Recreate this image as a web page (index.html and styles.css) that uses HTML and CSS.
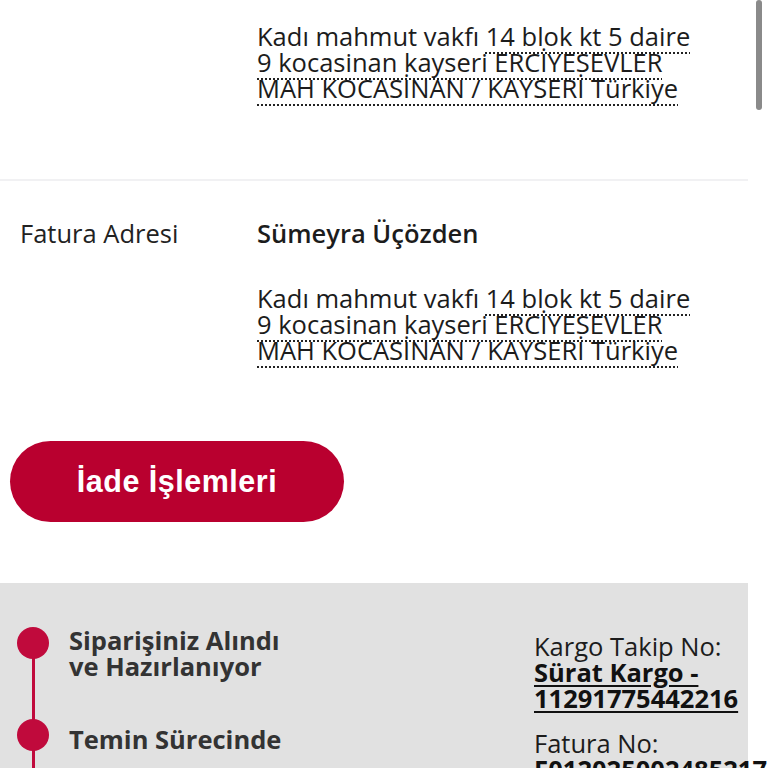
FILE: index.html
```html
<!DOCTYPE html>
<html lang="tr">
<head>
<meta charset="utf-8">
<link rel="stylesheet" href="styles.css">
</head>
<body>
<div class="page">
  <section class="addr-row first">
    <div class="label"></div>
    <div class="value">
      <p class="addr">Kadı mahmut vakfı <span class="detected">14 blok kt 5 daire 9 kocasinan kayseri ERCİYESEVLER MAH KOCASİNAN / KAYSERİ Türkiye</span></p>
    </div>
  </section>
  <div class="sep"></div>
  <section class="addr-row second">
    <div class="label">Fatura Adresi</div>
    <div class="value">
      <div class="name">Sümeyra Üçözden</div>
      <p class="addr">Kadı mahmut vakfı <span class="detected">14 blok kt 5 daire 9 kocasinan kayseri ERCİYESEVLER MAH KOCASİNAN / KAYSERİ Türkiye</span></p>
    </div>
  </section>
  <div class="btn-wrap">
    <button class="btn">İade İşlemleri</button>
  </div>
  <section class="status">
    <ol class="timeline">
      <li class="step"><span class="dot"></span><span class="step-text">Siparişiniz Alındı<br>ve Hazırlanıyor</span></li>
      <li class="step second-step"><span class="dot"></span><span class="step-text">Temin Sürecinde</span></li>
    </ol>
    <div class="info">
      <div class="info-item">
        <div class="info-label">Kargo Takip No:</div>
        <a class="info-link">Sürat Kargo -<br>11291775442216</a>
      </div>
      <div class="info-item">
        <div class="info-label">Fatura No:</div>
        <a class="info-link plain">E012025002485217</a>
      </div>
    </div>
  </section>
</div>
<div class="scrollbar"></div>
</body>
</html>
```

FILE: styles.css
```css
html, body {
  margin: 0;
  padding: 0;
  background: #ffffff;
  overflow: hidden;
}
body {
  font-family: "Open Sans", "Noto Sans", sans-serif;
  color: #1c1c1c;
  width: 768px;
  height: 768px;
  position: relative;
}
.page {
  width: 748px;
}
.addr-row {
  display: flex;
  font-size: 25.5px;
  line-height: 26px;
}
.addr-row.first {
  padding-top: 23px;
  height: 179px;
  box-sizing: border-box;
}
.addr-row.second {
  padding-top: 39px;
}
.label {
  width: 257px;
  padding-left: 20px;
  flex: none;
  box-sizing: border-box;
  color: #222;
}
.value {
  width: 446px;
}
.name {
  font-weight: 600;
  margin-bottom: 39px;
}
.addr {
  margin: 0;
}
.detected {
  text-decoration: underline dotted #222;
  text-decoration-thickness: 2px;
  text-underline-offset: 6px;
}
.sep {
  height: 2px;
  background: #f1f1f3;
}
.btn-wrap {
  padding: 78px 0 0 10px;
}
.btn {
  width: 334px;
  height: 81px;
  border: none;
  border-radius: 41px;
  background: #b9002f;
  color: #fff;
  font-family: "Liberation Sans", Arial, sans-serif;
  font-weight: 700;
  font-size: 30.5px;
  letter-spacing: 0.5px;
  padding: 0;
}
.status {
  margin-top: 61px;
  background: #e1e1e1;
  height: 186px;
  display: flex;
  padding: 44px 0 0 17px;
  box-sizing: border-box;
}
.timeline {
  list-style: none;
  margin: 0;
  padding: 0;
  width: 517px;
  flex: none;
}
.step {
  display: flex;
  align-items: flex-start;
  position: relative;
  font-weight: 700;
  font-size: 25.5px;
  line-height: 26px;
  color: #333;
  padding-bottom: 40px;
}
.step::before {
  content: "";
  position: absolute;
  left: 15px;
  top: 16px;
  bottom: -16px;
  width: 3px;
  background: #c00a3c;
}
.second-step {
  padding-bottom: 0;
}
.second-step::before {
  bottom: -40px;
}
.second-step .step-text {
  margin-top: 7px;
}
.dot {
  width: 32px;
  height: 32px;
  border-radius: 50%;
  background: #c00a3c;
  flex: none;
  margin-right: 20px;
  position: relative;
  z-index: 1;
}
.info {
  font-size: 25.5px;
  line-height: 26px;
  color: #1c1c1c;
  padding-top: 6px;
  white-space: nowrap;
}
.info-item {
  margin-bottom: 19px;
}
.info-link {
  font-weight: 700;
  text-decoration: underline;
  text-decoration-thickness: 2px;
  text-underline-offset: 3px;
  color: #111;
}
.info-link.plain {
  text-decoration: none;
}
.scrollbar {
  position: absolute;
  right: 6px;
  top: 0;
  width: 6px;
  height: 110px;
  border-radius: 3px;
  background: #8a8a8a;
}
```
